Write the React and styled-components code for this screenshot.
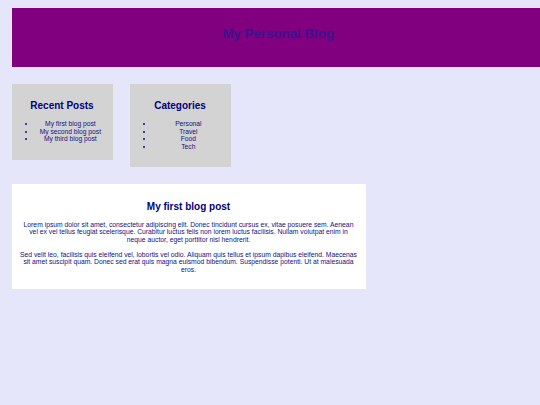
import React from 'react'
import styled, { createGlobalStyle } from 'styled-components'

const GlobalStyle = createGlobalStyle`
html, body {
  margin: 0;
  padding: 0;
  background-color: #e6e6fa;
  overflow: hidden;
}
body {
  font-family: "Liberation Sans", Arial, sans-serif;
  color: #000080;
}
`

const Page = styled.div`
padding: 8px 0 0 11.5px;
min-height: 405px;
box-sizing: border-box;
`

const Header = styled.header`
background-color: #800080;
margin-right: -5px;
padding: 18px 12px 25.3px;
text-align: center;
`

const SiteTitle = styled.h1`
margin: 0;
font-size: 13.3px;
line-height: 15.3px;
font-weight: bold;
color: #3f128c;
`

const Sidebar = styled.div`
display: flex;
align-items: flex-start;
gap: 17px;
margin-top: 17px;
`

const Widget = styled.div`
width: 101px;
box-sizing: border-box;
background-color: #d3d3d3;
padding: 8.3px;
text-align: center;
`

const Title = styled.h2`
margin: 8.3px 0;
font-size: 10px;
line-height: 11.5px;
font-weight: bold;
color: #000080;
`

const List = styled.ul`
margin: 8.3px 0;
padding-left: 16.7px;
font-size: 6.7px;
line-height: 7.7px;
`

const Item = styled.li`
color: #101088;
`

const Post = styled.article`
width: 354px;
box-sizing: border-box;
margin-top: 17px;
background-color: #fff;
padding: 8.3px;
text-align: center;
`

const Text = styled.p`
margin: 6.7px 0;
font-size: 6.77px;
line-height: 7.7px;
color: #101088;
`

const App = () => {
  return (
    <Page>
      <GlobalStyle />
      <Header>
        <SiteTitle>My Personal Blog</SiteTitle>
      </Header>
      <Sidebar>
        <Widget>
          <Title>Recent Posts</Title>
          <List>
            <Item>My first blog post</Item>
            <Item>My second blog post</Item>
            <Item>My third blog post</Item>
          </List>
        </Widget>
        <Widget>
          <Title>Categories</Title>
          <List>
            <Item>Personal</Item>
            <Item>Travel</Item>
            <Item>Food</Item>
            <Item>Tech</Item>
          </List>
        </Widget>
      </Sidebar>
      <Post>
        <Title>My first blog post</Title>
        <Text>
          Lorem ipsum dolor sit amet, consectetur adipiscing elit. Donec tincidunt cursus ex, vitae posuere sem. Aenean vel ex vel tellus feugiat scelerisque. Curabitur luctus felis non lorem luctus facilisis. Nullam volutpat enim in neque auctor, eget porttitor nisl hendrerit.
        </Text>
        <Text>
          Sed velit leo, facilisis quis eleifend vel, lobortis vel odio. Aliquam quis tellus et ipsum dapibus eleifend. Maecenas sit amet suscipit quam. Donec sed erat quis magna euismod bibendum. Suspendisse potenti. Ut at malesuada eros.
        </Text>
      </Post>
    </Page>
  )
}

export default App
